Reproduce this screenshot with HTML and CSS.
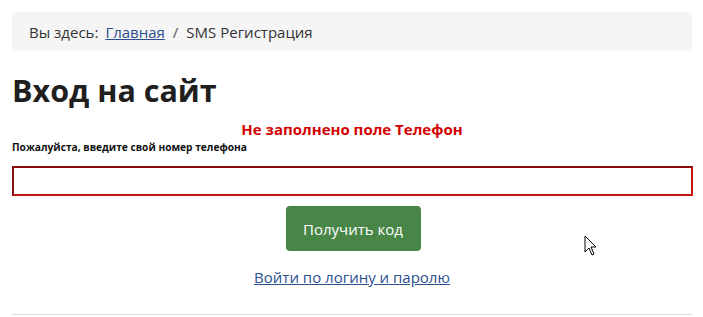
FILE: index.html
```html
<!DOCTYPE html>
<html lang="ru">
<head>
<meta charset="utf-8">
<link rel="stylesheet" href="styles.css">
</head>
<body>
<div class="page">
  <nav class="crumbs">
    <span class="here">Вы здесь:</span>
    <a href="#" class="crumb-link">Главная</a>
    <span class="sep">/</span>
    <span class="current">SMS Регистрация</span>
  </nav>
  <h1 class="title">Вход на сайт</h1>
  <div class="error">Не заполнено поле Телефон</div>
  <label class="label">Пожалуйста, введите свой номер телефона</label>
  <input class="phone" type="text">
  <div class="actions">
    <button class="btn">Получить код</button>
  </div>
  <div class="alt">
    <a href="#" class="alt-link">Войти по логину и паролю</a>
  </div>
  <div class="rule"></div>
</div>
<svg class="cursor" width="14" height="22" viewBox="0 0 14 22">
  <path d="M1 1 L1 17 L5 13 L8 20 L10 19 L7 12 L12 12 Z" fill="#fff" stroke="#000" stroke-width="1" stroke-linejoin="miter"/>
</svg>
</body>
</html>
```
FILE: styles.css
```css
html, body {
  margin: 0;
  padding: 0;
  background: #fff;
}
body {
  font-family: "Open Sans", "Noto Sans", "Liberation Sans", sans-serif;
  color: #222;
  position: relative;
  width: 703px;
  height: 317px;
  overflow: hidden;
}
.page {
  padding: 12px 11px 0 12px;
  display: flex;
  flex-direction: column;
}
.crumbs {
  background: #f5f5f5;
  height: 39px;
  display: flex;
  align-items: center;
  padding-left: 17px;
  font-size: 15px;
  color: #333;
}
.here { margin-right: 7px; }
.crumb-link { color: #2b4f8f; text-decoration: underline; }
.sep { margin: 0 8px; color: #555; }
.current { color: #333; }
.title {
  margin: 19px 0 0 0;
  font-size: 30.5px;
  font-weight: 700;
  line-height: 40px;
  color: #1f1f1f;
}
.error {
  margin-top: 9px;
  text-align: center;
  color: #d40000;
  font-weight: 700;
  font-size: 15px;
  line-height: 20px;
}
.label {
  font-size: 10.2px;
  font-weight: 700;
  line-height: 14px;
  margin-top: 1px;
  color: #111;
}
.phone {
  margin-top: 12px;
  box-sizing: border-box;
  width: 681px;
  height: 30px;
  border: 2px solid #c41414;
  border-top-color: #8a0d0d;
  border-left-color: #8a0d0d;
  padding: 0;
  background: #fff;
  outline: none;
}
.actions {
  display: flex;
  justify-content: center;
  margin-top: 10px;
}
.btn {
  background: #478646;
  color: #fff;
  border: none;
  border-radius: 4px;
  width: 135px;
  height: 45px;
  font-family: inherit;
  font-size: 15px;
  padding: 0;
  margin-left: 2px;
}
.alt {
  display: flex;
  justify-content: center;
  margin-top: 14px;
  font-size: 15px;
  line-height: 24px;
}
.alt-link { color: #2b4f8f; text-decoration: underline; }
.rule {
  margin-top: 25px;
  height: 1px;
  background: #dcdcdc;
}
.cursor {
  position: absolute;
  left: 584px;
  top: 235px;
}
```
